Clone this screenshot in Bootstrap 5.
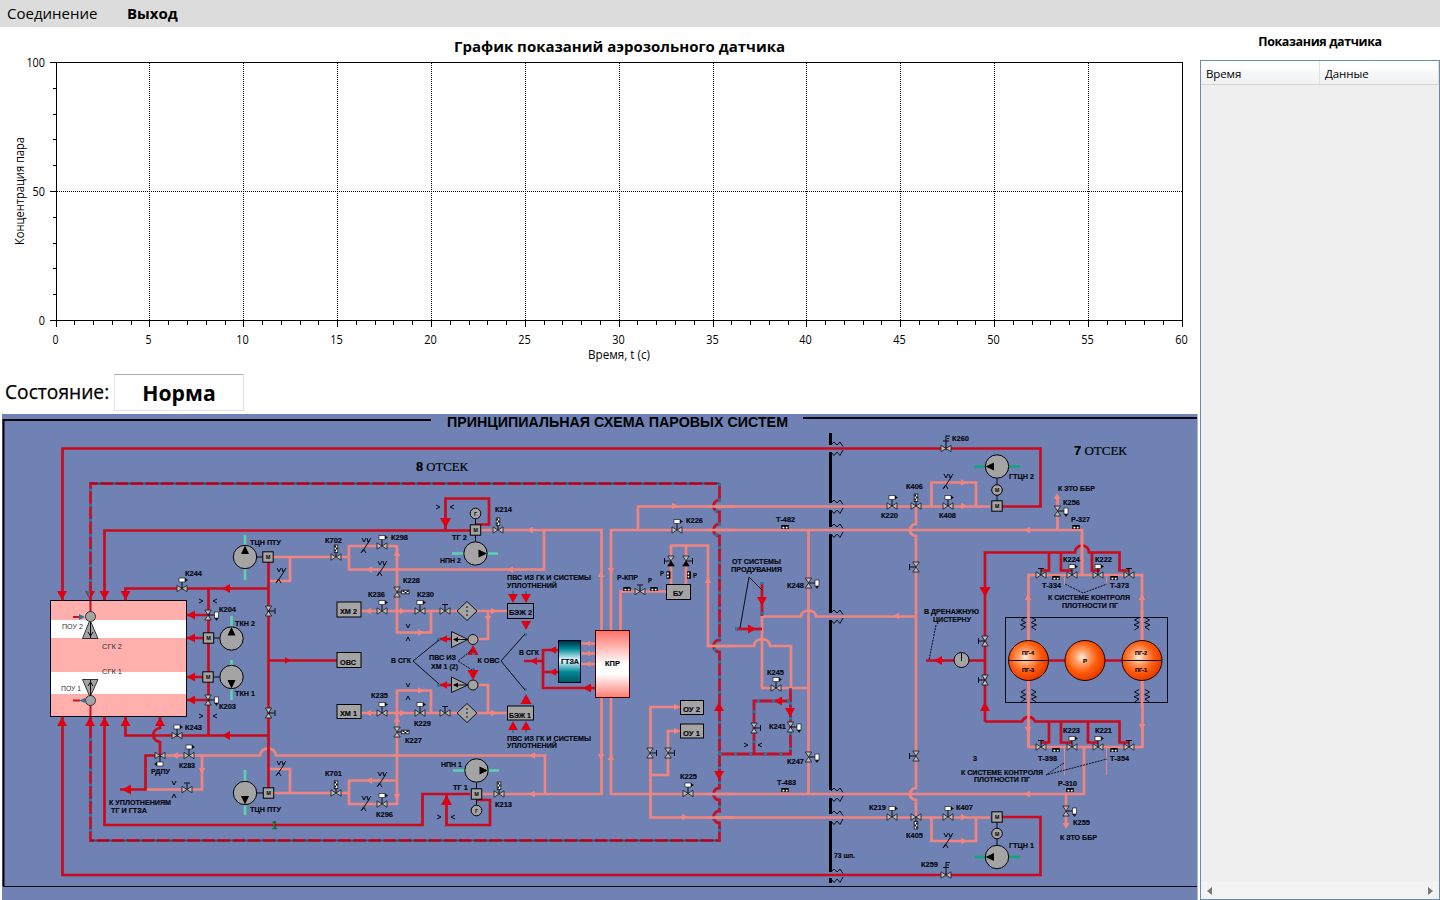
<!DOCTYPE html>
<html lang="ru">
<head>
<meta charset="utf-8">
<title>График показаний аэрозольного датчика</title>
<link href="https://cdn.jsdelivr.net/npm/bootstrap@5.3.0/dist/css/bootstrap.min.css" rel="stylesheet">
<style>
body{font-family:"Open Sans","Noto Sans",sans-serif;color:#000;background:#fff;height:100vh;overflow:hidden}
.menu-bar{height:27px;background:#dcdcdc;font-size:15px;line-height:27px}
.menu-bar a{color:#000;text-decoration:none;padding:0 0 0 7px;white-space:nowrap}
.menu-bar .first{width:120px;letter-spacing:0}
.main-col{width:1200px}
.side-col{width:240px}
.chart-area{height:347px}
.state-row{height:40px;padding-left:5px;font-size:19.2px}
.state-label{width:109px;white-space:nowrap;-webkit-text-stroke:.25px #000}
.state-box{width:130px;height:37px;border:1px solid #e2e3ea;border-top-color:#abadb3;font-size:21.2px;line-height:35px;font-weight:700}
.scheme-wrap{height:486px;padding-left:2px}
svg{display:block}
.side-title{height:33px;font-size:12.5px;font-weight:700;line-height:29px;letter-spacing:-.38px}
.grid-list{border:1px solid #688caf;background:#efefef}
.grid-head{height:24px;background:linear-gradient(#fff 0 40%,#f7f8fa 42%,#f1f2f4);border-bottom:1px solid #d5d5d5;font-size:11.5px;line-height:26px}
.grid-head div{width:119px;padding-left:5px;letter-spacing:-.1px;border-right:1px solid #dfe1e5}
.hbar{height:17px;padding:0 6px;background:#f3f3f3}
.lab text{font:bold 7.2px "Liberation Sans",Arial,sans-serif;fill:#05050c;stroke:#05050c;stroke-width:.15}
.ax text{font:12px "Open Sans","Noto Sans",sans-serif}
.r{fill:none;stroke:#cc0a1c;stroke-width:2.7}
.s{fill:none;stroke:#f0857f;stroke-width:2.7}
.bl{fill:none;stroke:#c40f26;stroke-width:2.8}
.bd{fill:none;stroke:#1f7ca8;stroke-width:3;stroke-dasharray:2.600 12.500}
.k{fill:none;stroke:#0a0a12;stroke-width:1}
.g{fill:none;stroke:#5bd3b0;stroke-width:2.6}
.box{fill:#a4a4a4;stroke:#000}
</style>
</head>
<body class="d-flex flex-column">
<nav class="menu-bar d-flex flex-shrink-0"><a class="first" href="#">Соединение</a><a class="fw-bold" href="#">Выход</a></nav>
<main class="d-flex flex-grow-1">
<section class="main-col d-flex flex-column">
<div class="chart-area">
<svg width="1200" height="347" viewBox="0 27 1200 347" class="ax">
<text x="454" y="52" textLength="331" lengthAdjust="spacingAndGlyphs" style="font-size:15px;font-weight:700">График показаний аэрозольного датчика</text>
<g id="axes" shape-rendering="crispEdges" stroke="#000"></g>
<g id="ticks"></g>
<text x="588" y="359" textLength="62" lengthAdjust="spacingAndGlyphs">Время, t (c)</text>
<text transform="translate(24 245) rotate(-90)" textLength="108" lengthAdjust="spacingAndGlyphs">Концентрация пара</text>
</svg>
</div>
<div class="state-row d-flex"><div class="state-label pt-1">Состояние:</div><div class="state-box text-center">Норма</div></div>
<div class="scheme-wrap">
<svg width="1196" height="486" viewBox="2 414 1196 486">
<defs>
<linearGradient id="teal" x2="0" y2="1"><stop offset="0" stop-color="#002c3a"/><stop offset=".2" stop-color="#008898"/><stop offset=".47" stop-color="#e8ffff"/><stop offset=".75" stop-color="#008898"/><stop offset="1" stop-color="#005560"/></linearGradient>
<linearGradient id="kpr" x2="0" y2="1"><stop offset="0" stop-color="#ff6f64"/><stop offset=".5" stop-color="#fff"/><stop offset=".65" stop-color="#fff"/><stop offset="1" stop-color="#ff7c72"/></linearGradient>
<radialGradient id="ball" cx=".42" cy=".42" r=".58"><stop offset="0" stop-color="#fff0e0"/><stop offset=".25" stop-color="#ffab78"/><stop offset=".65" stop-color="#ff5c0c"/><stop offset="1" stop-color="#e63c00"/></radialGradient>
<g id="v"><path d="M-5-3.2V3.2L0 0L5-3.2V3.2L0 0Z" fill="#b8c0c4" stroke="#222" stroke-width=".9"/></g>
<g id="vf"><use href="#v"/><path d="M0 0V-8" class="k"/><rect x="-3" y="-10.5" width="6" height="4" fill="#fff" stroke="#222" stroke-width=".7"/><path d="M3-10.5L6-8.5L3-6.5" fill="#111"/></g>
<g id="vh"><use href="#v"/><path d="M0 0V-6M-3-6.5H3" class="k"/></g>
<g id="vc"><use href="#v"/><path d="M0 0V-6" class="k"/><rect x="-1.8" y="-12" width="3.6" height="7.6" fill="#fff" stroke="#111" stroke-width=".8"/><path d="M-1.5-10.5H0M0-8.5H1.5M-1.5-6.5H0" stroke="#000" stroke-width="2"/></g>
<g id="vl"><use href="#v"/><path d="M0 0V-13M-3-7.500H3M0-12.500H4M1-10H3" class="k"/></g>
<g id="gg"><rect x="-3.7" y="-2" width="7.4" height="4" fill="#000"/><path d="M-2.5.6H-.6M.8.6H2.6" stroke="#fff" stroke-width="1.6"/></g>
<g id="wv"><path d="M-4-8L-2-4L0-8M1-8L2-4L5-8M4-6L-4 6M-5 7L-2.500 3L0 7" class="k" stroke-width=".8"/></g>
<g id="zz"><path d="M0-3L3-6L6-3L9-6L12-1.500M0 4L3 7.500L6 4L9 7.500L12 2" class="k" stroke-width="1.300"/></g>
</defs>
<rect x="2" y="414" width="1196" height="486" fill="#6f82b3"/>
<path d="M1197.500 414V900" stroke="#a9b4d2"/>
<path d="M3.500 886V420H431M803 418H1197" fill="none" stroke="#05050c" stroke-width="2"/><path d="M3 886.500H1197" stroke="#05050c" stroke-width="1.200"/>
<!-- steam lines -->
<path class="s" d="M273 557H349M290 557V581H269M397 546H349V569.500H544V530M397 545V632.500H431V611M361 611H507M488 611V639H478M481 530H601.500V794H480M1082 575V530H611V794H1084V747M638 530V506.500H990M165 755.500H260A8 7 0 0 1 276 755.500H545V794M146 789.500H202V755M273 793H349M290 793V769H269M397 780.500H349V804H397M397 805V690.500H431V713M361 713H507M488 713V685H478M671 584V545.500H708V646H754A8 7 0 0 1 770 646H791V688M686 545V584M666 591.500H620.500V630M762 616V688H808M762 616.500H801A7.500 6 0 0 1 816 616.500H916M808.500 530V794M680 707H650.500V817.500H990M680 731H668V775H650M931.500 506V482.500H976V506M931.500 817V841H976V817M916 506V524A6 6 0 0 0 916 536V788A6 6 0 0 0 916 800V817M1057.500 530V498M1028.500 642V575H1142V642M1028.500 680V747H1142.500V680M1066 794V826M581 643.500H595M581 653.500H595M581 664H595"/>
<path class="s" style="stroke-width:1" d="M1064.500 747V775M1106.500 747V775M1064.500 577V585M1106.500 577V585"/>
<path class="r" d="M62.500 600V448.500H1040.500V506.500H1002M104.500 600V530.500H470M125.500 600V588.500H268M268.500 562V788M208.500 588V735M187 615H208M187 638H208M187 677H208M187 700H208M125.500 717V735.500H268M160 717V728C151 730 151 740 160 742V755.500H145.500V789.500H120M268 660.500H337M104.500 717V825H422.500V794H470M62.500 717V875H1040.500V817H1002M445.500 530V498.500H489V524.500H475M446.500 795V825H490V800H476M595 688H543V650H558M524 661H543M543 672H558M439 639H451M439 685H451M985 722V552.500H1075A7 7 0 0 1 1089 552.500H1119.500V570.500H1129M1049 552V570.500H1041M1061 552V570.500H1072M1092 552V570.500H1100M985 721.500H1022A7 7 0 0 1 1035 721.500H1119.500V742.500H1129M1049 721V742.500H1041M1061 721V742.500H1072M1088 721V742.500H1098M926 660.500H985M1040 660.500H1140"/>
<path class="s" d="M1082 534V575M1028.500 705V747"/>
<g id="mix"></g>
<g id="arrows"></g>
<!-- bulkhead -->
<path d="M830.500 433V445M830.500 452V503M830.500 510V527M830.500 534V613M830.500 620V790M830.500 798V814M830.500 821V872M830.500 878V883" stroke="#000" stroke-width="3"/>
<!-- condenser -->
<rect x="50.500" y="600.500" width="136" height="116" fill="#ffb0ad"/><path d="M51 620H186V638H51ZM51 672H186V694H51Z" fill="#fff"/><rect x="50.500" y="600.500" width="136" height="116" class="k"/>
<path class="r" style="stroke-width:2" d="M90.500 601V612M90.500 705V716"/>
<g fill="#a4a4a4" stroke="#333"><path d="M90 620L82.500 638.500H98Z"/><circle cx="90.500" cy="616.500" r="5"/><path d="M90 697L82.500 679.500H98Z"/><circle cx="90.500" cy="700.500" r="5"/></g>
<path class="k" d="M90.500 622V638M88 632L90.500 636L93 632M90.500 696V680M88 686L90.500 682L93 686"/>
<path d="M73 617H80M73 700.500H80" stroke="#d01020" stroke-width="2"/><path d="M79 614L85 617L79 620ZM85 698L79 700.500L85 703Z" fill="#2b78a4"/>
<!-- pumps -->
<path class="g" d="M245 535V580M231.500 616V650M231.500 660V700M245 770V815M452 553.500H498M453 770.500H499"/><path class="g" style="stroke:#10a878" d="M974 466.500H1020M974 857H1020"/>
<path class="k" d="M245 557H268M208 638H231M208 677H231M245 793H268M475.500 513V553M476.500 770V810M997 466V506M997 817V857"/>
<g id="pumps"></g><g id="boxes"></g><g id="parts"></g>
<rect x="558.500" y="640.500" width="22" height="42" fill="url(#teal)" stroke="#002"/><rect x="595.500" y="630.500" width="34" height="67" fill="url(#kpr)" stroke="#400"/>
<g stroke="#111" fill="#a4a4a4"><path d="M467 601.500L477 611L467 620.500L457 611ZM467 703.500L477 713L467 722.500L457 713Z"/><path d="M451.500 631.500V647.500L468 639.500ZM451.500 677V692.500L468 685Z"/><circle cx="473" cy="639.500" r="5"/><circle cx="473" cy="685" r="5"/></g>
<path class="k" stroke-dasharray="2 2" d="M467 606V617M467 708V719"/><path class="k" d="M454 639.500H467M454 685H467"/>
<path d="M453 639.500L458 637V642ZM453 685L458 682.500V687.500Z"/>
<!-- reactor -->
<rect x="1005.500" y="617.500" width="162" height="85" class="k"/>
<path class="s" d="M1028.500 610V642M1142 610V642M1028.500 680V708M1142 680V708"/>
<g fill="url(#ball)" stroke="#200"><circle cx="1028.500" cy="660.500" r="20"/><circle cx="1085" cy="660.500" r="20"/><circle cx="1142" cy="660.500" r="20"/></g><path class="k" d="M1008 660.500H1049M1122 660.500H1162"/>
<circle cx="961.500" cy="660" r="7.500" class="box"/><path class="k" d="M961.500 653V661"/>
<g id="bell"></g>
<!-- callouts -->
<path class="k" stroke-width=".8" d="M740 628L749 577L762 590M439 640L413 661L439 684M525 634L501 661L525 690" />
<path class="k" stroke-dasharray="2 1" d="M472 650L458 661L472 670M936 625L929 660M1065 584L1083 593L1107 584M1064 763L1046 775L1107 759"/>
<g class="lab" id="labels"></g>
<text x="447" y="427" textLength="341" lengthAdjust="spacingAndGlyphs" style="font:bold 14.500px 'Liberation Sans',sans-serif">ПРИНЦИПИАЛЬНАЯ СХЕМА ПАРОВЫХ СИСТЕМ</text>
<g style="font:13px 'Liberation Serif',serif" stroke="#000" stroke-width=".2"><text x="416" y="470.500" textLength="52" lengthAdjust="spacingAndGlyphs"><tspan font-weight="bold" font-family="Liberation Sans">8</tspan> ОТСЕК</text><text x="1074" y="454.500" textLength="53" lengthAdjust="spacingAndGlyphs"><tspan font-weight="bold" font-family="Liberation Sans">7</tspan> ОТСЕК</text></g>
<text x="271.500" y="829" fill="#0b6b2b" stroke="#0b6b2b" stroke-width=".4" style="font:bold 12px 'Liberation Serif',serif">1</text>
</svg>
</div>
</section>
<aside class="side-col d-flex flex-column">
<div class="side-title text-center">Показания датчика</div>
<div class="grid-list flex-grow-1 d-flex flex-column">
<div class="grid-head d-flex"><div>Время</div><div>Данные</div></div>
<div class="flex-grow-1"></div>
<div class="hbar d-flex justify-content-between align-items-center"><svg width="5" height="8"><path d="M5 0V8L0 4Z" fill="#777"/></svg><svg width="5" height="8"><path d="M0 0V8L5 4Z" fill="#777"/></svg></div>
</div>
</aside>
</main>
<script src="https://cdn.jsdelivr.net/npm/bootstrap@5.3.0/dist/js/bootstrap.bundle.min.js"></script>
<script>
const put=(id,h)=>document.getElementById(id).innerHTML=h;
// chart axes: 0-60 s horizontally, 0-100 vertically
let a='<path fill="none" d="M50 62.5H1182.5V326M56.5 62V326M50 320.5H1182"/>',t='';
for(let i=0;i<=60;i++){const x=Math.round(56+i*18.77-(i?.4:0))+.5;
 if(i%5){a+=`<path d="M${x} 321V325"/>`}else{a+=`<path d="M${x} 321V327"/>`;if(i&&i<60)a+=`<path stroke-dasharray="1 1" d="M${x} 63V320"/>`;t+=`<text x="${x-1}" y="344" text-anchor="middle" textLength="${i<10?6:12.5}" lengthAdjust="spacingAndGlyphs">${i}</text>`}}
for(let i=0;i<=10;i++){const y=Math.round(320-i*25.8)+.5;a+=`<path d="M${i%5?53:50} ${y}H56"/>`}
a+='<path stroke-dasharray="1 1" d="M57 191.500H1182"/>';
[[0,325],[50,196],[100,67]].forEach(([v,y])=>t+=`<text x="45" y="${y}" text-anchor="end" textLength="${(''+v).length*6.2}" lengthAdjust="spacingAndGlyphs">${v}</text>`);
put('axes',a);put('ticks',t);
// two-medium lines: red with blue dashes
const mp=['M719.500 483.500H90.500V600','M719.500 483.500V500A6 6 0 0 0 719.500 512V524A6 6 0 0 0 719.500 536V640A6 6 0 0 0 719.500 652V788A6 6 0 0 0 719.500 800V811A6 6 0 0 0 719.500 823V840.500H90.500V717','M719 754H790.500V688M790 701H754V754','M762 582V616','M735 629H762'];
put('mix',mp.map(d=>`<path class="bl" d="${d}"/><path class="bd" d="${d}"/>`).join('')+'<path stroke="#5a1030" stroke-width=".8" stroke-opacity=".6" fill="none" d="M90 483.500H719M90 840.500H719"/><path class="s" d="M708 506.500H735M708 530H735M708 646H735M708 794H735M708 817.500H735"/>');
// arrows: x, y of tip, rotation, size, colour
const R='#e00010',S='#f5857c';
const ar=[[62,600,180,9,R],[90,600,180,9,R],[104.500,600,180,9,R],[125.500,600,180,9,R],[62,717,0,9,R],[90,717,0,9,R],[104.500,717,0,9,R],[125.500,717,0,9,R],[160,717,0,9,R],[187,615,270,8,R],[187,638,270,8,R],[187,677,270,8,R],[187,700,270,8,R],[222,588.500,270,8,R],[222,735.500,270,8,R],[122,789.500,270,9,R],[291,660.500,90,6,R],[445.500,528,180,10,R],[446.500,795,0,10,R],[440,639,270,7,R],[440,685,270,7,R],[473,645,0,10,R],[473,680,180,10,R],[513,603,180,9,R],[526,603,180,9,R],[526,630,180,9,R],[513,721,0,9,R],[526,721,0,9,R],[526,694,0,10,R],[530,661,270,7,R],[549,650,270,7,R],[549,672,270,7,R],[583,688,270,8,R],[719,702,0,9,R],[719,780,180,9,R],[774,701,270,8,R],[790,717,180,9,R],[762,606,180,9,R],[756,629,90,8,R],[985,597,180,10,R],[985,702,0,9,R],[934,660.500,270,8,R],
[365,611,270,6,S],[406,611,90,6,S],[497,611,90,6,S],[397,550,0,6,S],[366,569.500,270,6,S],[507,569.500,270,6,S],[424,632.500,90,6,S],[527,530,270,6,S],[601,571,0,6,S],[611,574,180,6,S],[678,506,90,6,S],[708,577,0,6,S],[397,716,0,6,S],[365,713,270,6,S],[406,713,90,6,S],[497,713,90,6,S],[424,690.500,90,6,S],[366,780.500,270,6,S],[397,800,180,6,S],[529,755.500,270,6,S],[529,794,270,6,S],[601,760,180,6,S],[611,754,0,6,S],[680,707,90,6,S],[680,731,90,6,S],[688,817,90,6,S],[172,755.500,270,6,S],[202,774,180,6,S],[893,616,270,6,S],[967,482.500,90,6,S],[967,506,90,6,S],[967,817,90,6,S],[967,841,90,6,S],[1057,493,0,6,S],[1024,530,270,6,S],[1024,794,270,6,S],[1028,594,0,6,S],[1142,594,0,6,S],[1028,733,180,6,S],[1142,730,180,6,S],[1066,829,180,6,S],[585,643.500,270,5,S],[585,653.500,270,5,S],[585,664,270,5,S],[488,622,180,6,S]];
put('arrows',ar.map(([x,y,r,s,c])=>`<path transform="translate(${x} ${y}) rotate(${r})" d="M0 0L${s*.55} ${s}H${-s*.55}Z" fill="${c}"/>`).join('')+'<g fill="#2b78a4"><path d="M86 591H90V598ZM524 633h3v3h-3zM524 688h3v3h-3zM437 638h3v3h-3zM437 684h3v3h-3zM472 653h3v2h-3zM472 668h3v2h-3zM512 591h2v3h-2zM525 591h2v3h-2zM512 730h2v3h-2zM525 730h2v3h-2z"/></g>');
// pumps: x, y, direction of the inner triangle
put('pumps',[[245,557,0],[231.500,638.500,0],[231.500,677,180],[245,793,180],[475.500,553.500,90],[476.500,770.500,90],[997,466.500,270],[997,857,270]].map(([x,y,r])=>`<circle cx="${x}" cy="${y}" r="11.700" class="box"/><path transform="translate(${x} ${y}) rotate(${r})" d="M0-11.500L4-3H-4Z" fill="#000"/>`).join('')+[[475.500,513.500,'Г'],[476.500,810.500,'Г'],[997,490,'М'],[997,833.500,'М']].map(([x,y,c])=>`<circle cx="${x}" cy="${y}" r="5.300" class="box"/><text x="${x}" y="${y+2}" font-size="5" font-weight="bold" text-anchor="middle">${c}</text>`).join(''));
put('boxes',[[268,557],[208.500,638],[208,677],[268.500,793],[475.500,530],[476.500,794],[997,506],[997,817]].map(([x,y])=>`<rect x="${x-5.200}" y="${y-5.200}" width="10.400" height="10.400" class="box"/><text x="${x}" y="${y+2}" font-size="5" font-weight="bold" text-anchor="middle">М</text>`).join('')+[[337,602,24,15],[337,652.500,24,15],[337,704.500,24,14],[507.500,603.500,26,15,'#7888b0'],[507.500,706,26,14],[666.500,584.500,24,15],[680.500,700.500,23,14],[680.500,724,23,14]].map(([x,y,w,h,f])=>`<rect x="${x}" y="${y}" width="${w}" height="${h}" class="box" ${f?`style="fill:${f}"`:''}/>`).join(''));
// valves and gauges: kind, x, y, rotation
const pv=[['vf',182,588.500],['vf',177,735.500],['vf',208,615,90],['vf',208,700,90],['vh',268.500,611,90],['vh',268.500,713,90],['vf',160,755.500,180],['vf',189,755.500],['vh',187,789.500],['vc',336,557],['vf',382,546],['vc',397,592,90],['vf',382,611],['vf',420,611],['vh',445,611],['vc',498,530],['vf',382,713],['vf',420,713],['vh',445,713],['vc',397,732,90],['vc',336,793],['vf',382,804],['vc',499,794],['vf',677,530],['vh',640,591.500],['vh',671,561,270],['vh',686,561,90],['vf',808.500,583,90],['vf',776,688],['vf',790.500,727,90],['vh',754,728,90],['vf',808.500,757,90],['vh',650,753,90],['vh',668,753,90],['vf',688,793.500],['vf',892,506],['vc',916,506],['vf',948,506],['vl',946,448.500],['vh',916,567,270],['vh',916,756,270],['vf',1057.500,511,90],['vh',1041,575],['vf',1072,575],['vf',1098,575],['vh',1129,575],['vh',1041,747],['vf',1072,747],['vf',1098,747],['vh',1129,747],['vh',985,641,270],['vh',985,680,270],['vf',892,817],['vc',916,817,180],['vf',948,817],['vl',946,875],['vf',1066,811,90],
['gg',627,589],['gg',654,589],['gg',668.500,575,90],['gg',689,575,90],['gg',785,527],['gg',785,790],['gg',1076,527],['gg',1056,578],['gg',1114,578],['gg',1056,750],['gg',1114,750],['gg',1070,790],['wv',281,576],['wv',281,769],['wv',366,546],['wv',382,569],['wv',382,780],['wv',366,804],['wv',948,482],['wv',948,841],...[448,506,530,616,794,817,875].map(y=>['zz',831,y])];
put('parts',pv.map(([k,x,y,r=0])=>`<use href="#${k}" transform="translate(${x} ${y})${r?` rotate(${r})`:''}"/>`).join('')+'<path d="M671 561L674.500 566H667.500ZM686 561L689.500 566H682.500Z"/>');
put('bell',[[1028.500,624],[1142,624],[1028.500,696],[1142,696]].map(([x,y])=>[-1,1].map(s=>`<path class="k" stroke-width="1.300" transform="translate(${x} ${y}) scale(${s} 1)" d="M3-6.500L7.500-4L3-1.500M2.500-1.500L8 .8L3 3L7.500 6"/>`).join('')).join(''));
// labels: text, x, baseline, width
const L=[['ТЦН ПТУ',250,545,31],['К244',185,576,17],['К204',219,612,17],['ТКН 2',235,626,20],['ТКН 1',235,696,20],['К203',219,709,17],['К243',185,730,17],['К283',179,768,16],['РДПУ',151,774,19],['К УПЛОТНЕНИЯМ',109,805,62],['ТГ И ГТЗА',111,813,36],['ТЦН ПТУ',250,812,31],['К702',325,543,17],['К298',391,540,17],['К228',403,583,17],['К236',368,597,17],['К230',417,597,17],['ХМ 2',340,613.500,17],['ОВС',340,664.500,16],['ХМ 1',340,715.500,17],['К214',495,512,17],['ТГ 2',452,540,15],['НПН 2',440,563,21],['ПВС ИЗ ГК И СИСТЕМЫ',507,580,84],['УПЛОТНЕНИЙ',507,588,50],['БЭЖ 2',509,615,23],['БЭЖ 1',509,717.500,22],['В СГК',391,663,20],['ПВС ИЗ',429,660,27],['ХМ 1 (2)',431,668.500,27],['К ОВС',477.500,663,22],['В СГК',519,655,20],['ГТЗА',561,664,18],['КПР',605,665.500,15],['К235',371,698,17],['К229',414,726,17],['К227',405,743,17],['К701',325,776,17],['К296',376,817,17],['НПН 1',441,767,21],['ТГ 1',453,790,15],['К213',495,807,17],['ПВС ИЗ ГК И СИСТЕМЫ',507,740.500,84],['УПЛОТНЕНИЙ',507,748,50],['К226',686,523,17],['Т-482',776,522,19],['Р-КПР',617,580,21],['Р',648,583,4],['Р',660,576,4],['Р',693,578,4],['БУ',673,596,10],['ОТ СИСТЕМЫ',732,564,49],['ПРОДУВАНИЯ',731,572,51],['К248',787,588,17],['К245',767,675,17],['К241',769,729,17],['К247',787,764,17],['Т-483',777,785,19],['ОУ 2',683,712,17],['ОУ 1',683,736,17],['К225',680,779,17],['73 шп.',834,858,21],['К260',952,441,17],['К406',906,489,17],['К220',881,518,17],['К408',939,518,17],['ГТЦН 2',1009,479,25],['К ЗТО ББР',1058,491,37],['К256',1063,505,17],['Р-327',1071,522,19],['К224',1063,561.500,17],['К222',1095,561.500,17],['Т-334',1042,588,19],['Т-373',1110,588,19],['К СИСТЕМЕ КОНТРОЛЯ',1048,600,82],['ПЛОТНОСТИ ПГ',1062,608,56],['В ДРЕНАЖНУЮ',924,614,55],['ЦИСТЕРНУ',933,622,38],['К223',1063,733,17],['К221',1095,733,17],['Т-398',1038,761,19],['Т-354',1110,761,19],['3',973,761,4],['К СИСТЕМЕ КОНТРОЛЯ',961,775,82],['ПЛОТНОСТИ ПГ',974,782,56],['Р-310',1058,786,19],['К255',1073,825,17],['К ЗТО ББР',1060,840,37],['К219',869,810,17],['К405',906,838,17],['К407',956,810,17],['ГТЦН 1',1009,848,25],['К259',921,867,17]];
const M=[['ПГ-4',1022,654.500,12],['ПГ-3',1022,671.500,12],['ПГ-2',1135,654.500,12],['ПГ-1',1135,671.500,12],['Р',1083,663,4]];
const W=[['ПОУ 2',62,628.500,21],['СГК 2',102,649,20],['СГК 1',102,674,20],['ПОУ 1',61,691,20]];
const tx=([s,x,y,w],st='')=>`<text x="${x}" y="${y}" textLength="${w}" lengthAdjust="spacingAndGlyphs" style="${st}">${s}</text>`;
put('labels',L.map(l=>tx(l)).join('')+M.map(l=>tx(l,'font-size:5px')).join('')+W.map(l=>tx(l,'font-weight:400;stroke:none;fill:#333')).join('')+
[[202,604],[202,719],[439,510],[440,820],[747,748]].map(([x,y])=>`<path class="k" d="M${x-3} ${y-5}L${x+1} ${y-3}L${x-3} ${y-1}M${x+15} ${y-5}L${x+11} ${y-3}L${x+15} ${y-1}"/>`).join('')+
[[408,625],[408,684],[174,782]].map(([x,y])=>`<path class="k" d="M${x-2} ${y-1}L${x} ${y+3}L${x+2} ${y-1}M${x-2} ${y+16}L${x} ${y+12}L${x+2} ${y+16}"/>`).join(''));
</script>
</body>
</html>
